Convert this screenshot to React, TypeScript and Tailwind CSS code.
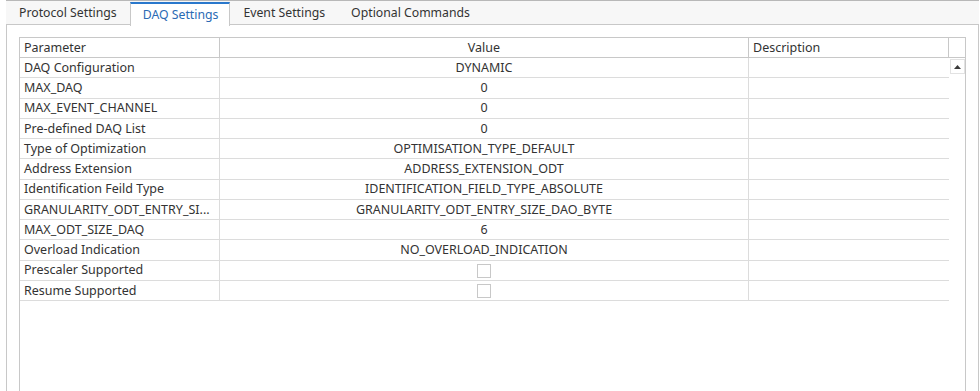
import React from "react";

type Row = { name: string; value?: string; check?: boolean };

const rows: Row[] = [
  { name: "DAQ Configuration", value: "DYNAMIC" },
  { name: "MAX_DAQ", value: "0" },
  { name: "MAX_EVENT_CHANNEL", value: "0" },
  { name: "Pre-defined DAQ List", value: "0" },
  { name: "Type of Optimization", value: "OPTIMISATION_TYPE_DEFAULT" },
  { name: "Address Extension", value: "ADDRESS_EXTENSION_ODT" },
  { name: "Identification Feild Type", value: "IDENTIFICATION_FIELD_TYPE_ABSOLUTE" },
  { name: "GRANULARITY_ODT_ENTRY_SI...", value: "GRANULARITY_ODT_ENTRY_SIZE_DAO_BYTE" },
  { name: "MAX_ODT_SIZE_DAQ", value: "6" },
  { name: "Overload Indication", value: "NO_OVERLOAD_INDICATION" },
  { name: "Prescaler Supported", check: true },
  { name: "Resume Supported", check: true },
];

const tabs = ["Protocol Settings", "DAQ Settings", "Event Settings", "Optional Commands"];

const Tab = ({ label, active }: { label: string; active?: boolean }) => {
  if (active) {
    return (
      <div className="relative z-10 -mb-px h-[24px] mt-px pl-[12px] pr-[11px] pt-px flex items-center bg-white border-t-2 border-t-[#2a78cc] border-x border-x-[#c8c8c8] text-[#2a6ab4]">
        {label}
      </div>
    );
  }
  return <div className="h-[23px] px-[13px] pt-[2px] flex items-center text-[#333]">{label}</div>;
};

export default function App() {
  return (
    <div
      className="w-[980px] h-[391px] overflow-hidden bg-white pl-[6px] pr-[1px] flex flex-col"
      style={{ fontFamily: '"Noto Sans", "Open Sans", sans-serif' }}
    >
      <div className="flex items-start h-[25px] bg-[#f7f7f7] border-t border-t-[#b8b8b8] border-b border-b-[#c8c8c8] text-[12.25px] leading-none">
        {tabs.map((t) => (
          <Tab key={t} label={t} active={t === "DAQ Settings"} />
        ))}
      </div>
      <div className="flex-1 min-h-0 border-x border-[#c8c8c8] pt-[12px] px-[12px]">
        <div className="h-full border-t border-x border-[#c8c8c8] flex flex-col text-[12.5px] text-[#333] leading-none">
          <div className="flex h-[20px] border-b border-[#c8c8c8]">
            <div className="w-[200px] border-r border-[#c8c8c8] pl-[4px] pt-px flex items-center">Parameter</div>
            <div className="w-[529px] border-r border-[#c8c8c8] pt-px flex items-center justify-center">Value</div>
            <div className="w-[200px] border-r border-[#c8c8c8] pl-[4px] pt-px flex items-center">Description</div>
            <div className="flex-1" />
          </div>
          <div className="flex flex-1 min-h-0">
            <div className="w-[929px] flex flex-col">
              {rows.map((r) => (
                <div key={r.name} className="flex h-[20.25px] border-b border-[#dcdcdc]">
                  <div className="w-[200px] border-r border-[#dcdcdc] pl-[4px] pt-px flex items-center whitespace-nowrap">
                    {r.name}
                  </div>
                  <div className="w-[529px] border-r border-[#dcdcdc] pt-px flex items-center justify-center whitespace-nowrap">
                    {r.check ? (
                      <span className="block w-[14px] h-[14px] border border-[#c8c8c8] bg-white" />
                    ) : (
                      r.value
                    )}
                  </div>
                  <div className="flex-1" />
                </div>
              ))}
            </div>
            <div className="flex-1 pt-[1px] pl-px">
              <div className="w-[15px] h-[15px] border border-[#e2e2e2] bg-white flex items-center justify-center">
                <svg width="7" height="4" viewBox="0 0 7 4">
                  <path d="M3.5 0 L7 4 L0 4 Z" fill="#3a3a3a" />
                </svg>
              </div>
            </div>
          </div>
        </div>
      </div>
    </div>
  );
}
